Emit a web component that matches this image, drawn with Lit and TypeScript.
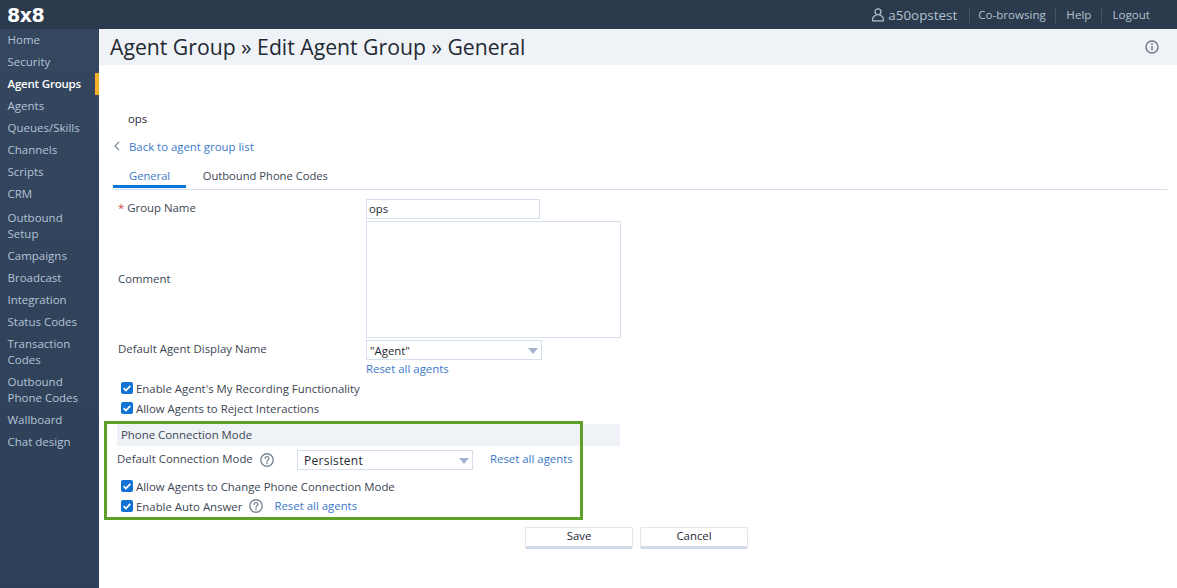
import { LitElement, css, html } from "lit";
import { customElement, property } from "lit/decorators.js";

const NAV = [
  "Home", "Security", "Agent Groups", "Agents", "Queues/Skills", "Channels", "Scripts", "CRM",
  "Outbound Setup", "Campaigns", "Broadcast", "Integration", "Status Codes",
  "Transaction Codes", "Outbound Phone Codes", "Wallboard", "Chat design",
];

const helpIcon = html`<svg class="help" width="16" height="16" viewBox="0 0 16 16" fill="none">
  <circle cx="8" cy="8" r="6.2" stroke="#7b8794" stroke-width="1.4"></circle>
  <path d="M6.1 6.4a1.9 1.9 0 1 1 2.9 1.6c-.7.4-1 .8-1 1.5" stroke="#7b8794" stroke-width="1.3" stroke-linecap="round"></path>
  <circle cx="8" cy="11.4" r=".8" fill="#7b8794"></circle>
</svg>`;

@customElement("app-check")
export class AppCheck extends LitElement {
  @property({ type: String }) label = "";

  render() {
    return html`
      <span class="box">
        <svg width="12" height="12" viewBox="0 0 12 12" fill="none">
          <path d="M2.6 6.2l2.3 2.3 4.4-4.6" stroke="#fff" stroke-width="1.7"></path>
        </svg>
      </span>
      <span class="text">${this.label}</span>
      <slot></slot>
    `;
  }

  static styles = css`
    :host {
      display: flex;
      align-items: center;
      height: 20px;
      color: #3c4654;
    }
    .box {
      width: 12px;
      height: 12px;
      border-radius: 2px;
      background: #1272d3;
      display: flex;
      margin-right: 3px;
    }
    .text {
      white-space: nowrap;
    }
  `;
}

@customElement("app-select")
export class AppSelect extends LitElement {
  @property({ type: String }) value = "";

  render() {
    return html`<span>${this.value}</span><i class="arrow"></i>`;
  }

  static styles = css`
    :host {
      box-sizing: border-box;
      display: flex;
      align-items: center;
      justify-content: space-between;
      height: 20px;
      border: 1px solid #d5dfee;
      padding: 0 3px 0 3px;
      color: #1f2933;
    }
    .arrow {
      width: 0;
      height: 0;
      border-left: 5px solid transparent;
      border-right: 5px solid transparent;
      border-top: 6px solid #a3b4cc;
      margin-top: 2px;
    }
  `;
}

@customElement("app-root")
export class AppRoot extends LitElement {
  render() {
    return html`
      <header class="topbar">
        <div class="logo">8x8</div>
        <div class="top-links">
          <span class="user">
            <svg width="16" height="16" viewBox="0 0 16 16" fill="none" stroke="#b4c0cf" stroke-width="1.2">
              <circle cx="8" cy="4.8" r="3"></circle>
              <path d="M6.4 8.2C4 8.8 2.7 10 2.7 12.2v1.6h10.6v-1.6c0-2.2-1.3-3.4-3.7-4"></path>
            </svg>
            a50opstest
          </span>
          <span class="top-link cobrowse">Co-browsing</span>
          <span class="top-link help-link">Help</span>
          <span class="top-link">Logout</span>
        </div>
      </header>
      <div class="body">
        <nav class="sidebar">
          ${NAV.map((item) => html`<a class="nav-item ${item === "Agent Groups" ? "active" : ""}">${item}</a>`)}
        </nav>
        <main class="main">
          <div class="title-bar">
            <h1>Agent Group » Edit Agent Group » General</h1>
            <svg width="16" height="16" viewBox="0 0 16 16" fill="none">
              <circle cx="8" cy="8" r="6" stroke="#6d7682" stroke-width="1.4"></circle>
              <path d="M8 7.2v4" stroke="#6d7682" stroke-width="1.5"></path>
              <circle cx="8" cy="5" r=".9" fill="#6d7682"></circle>
            </svg>
          </div>
          <div class="content">
            <div class="group-name">ops</div>
            <div class="back">
              <svg width="8" height="10" viewBox="0 0 8 10" fill="none">
                <path d="M6 .8L2 5l4 4.2" stroke="#7b8794" stroke-width="1.2"></path>
              </svg>
              <a class="link">Back to agent group list</a>
            </div>
            <div class="tabs">
              <span class="tab active">General</span>
              <span class="tab">Outbound Phone Codes</span>
            </div>

            <div class="form">
              <label class="row-name"><span class="req">*</span> Group Name</label>
              <div class="input name-input">ops</div>
              <label class="row-comment">Comment</label>
              <div class="input textarea"></div>
              <label class="row-display">Default Agent Display Name</label>
              <div>
                <app-select class="display-select" value='"Agent"'></app-select>
                <a class="link reset">Reset all agents</a>
              </div>
            </div>

            <div class="checks">
              <app-check label="Enable Agent's My Recording Functionality"></app-check>
              <app-check label="Allow Agents to Reject Interactions"></app-check>
            </div>

            <section class="phone">
              <div class="section-head">Phone Connection Mode</div>
              <div class="mode-row">
                <span class="mode-label"><span class="mode-text">Default Connection Mode</span> ${helpIcon}</span>
                <app-select class="mode-select" value="Persistent"></app-select>
                <a class="link mode-reset">Reset all agents</a>
              </div>
              <div class="checks phone-checks">
                <app-check label="Allow Agents to Change Phone Connection Mode"></app-check>
                <app-check label="Enable Auto Answer">
                  ${helpIcon}
                  <a class="link auto-reset">Reset all agents</a>
                </app-check>
              </div>
              <div class="highlight"></div>
            </section>

            <div class="actions">
              <button>Save</button>
              <button>Cancel</button>
            </div>
          </div>
        </main>
      </div>
    `;
  }

  static styles = css`
    :host {
      display: block;
      height: 588px;
      overflow: hidden;
      font-family: "Open Sans", "Noto Sans", sans-serif;
      font-size: 11.4px;
      color: #3c4654;
      background: #fff;
    }
    .topbar {
      height: 29px;
      background: #2b3a4c;
      display: flex;
      align-items: center;
      justify-content: space-between;
      padding: 0 16px 0 7px;
    }
    .logo {
      color: #fff;
      font-family: "DejaVu Sans", sans-serif;
      font-weight: 700;
      font-size: 19px;
      letter-spacing: -0.5px;
    }
    .top-links {
      display: flex;
      align-items: center;
    }
    .user {
      display: flex;
      align-items: center;
      gap: 2px;
      font-size: 13.4px;
      color: #b4c0cf;
      padding-right: 12px;
      border-right: 1px solid #45536a;
      height: 16px;
    }
    .top-link {
      color: #b4c0cf;
      font-size: 11.6px;
      padding: 0 10.5px;
      height: 16px;
      line-height: 16px;
      border-left: 1px solid #45536a;
    }
    .cobrowse {
      border-left: 0;
      padding-left: 8px;
      padding-right: 9px;
    }
    .help-link {
      padding-right: 9.5px;
    }
    .top-link:last-child {
      padding-right: 11px;
    }
    .body {
      display: flex;
      height: 559px;
    }
    .sidebar {
      width: 99px;
      flex: none;
      background: linear-gradient(#34475f, #2e4058);
      display: flex;
      flex-direction: column;
    }
    .nav-item {
      box-sizing: border-box;
      padding: 3px 10px 3px 7.5px;
      min-height: 22px;
      line-height: 16px;
      color: #b4c3d6;
      font-size: 11.5px;
    }
    .nav-item:nth-child(9) {
      padding-top: 5px;
    }
    .nav-item.active {
      color: #fff;
      font-weight: 600;
      border-right: 4px solid #f6ae2d;
      padding-right: 0;
      white-space: nowrap;
      letter-spacing: -0.2px;
    }
    .main {
      flex: 1;
      min-width: 0;
    }
    .title-bar {
      height: 36px;
      background: #eff2f7;
      display: flex;
      align-items: center;
      justify-content: space-between;
      padding: 0 17px 2px 11px;
      box-sizing: border-box;
    }
    h1 {
      margin: 0;
      font-size: 21.2px;
      font-weight: 400;
      color: #1f2933;
    }
    .title-bar svg {
      margin-top: 2px;
    }
    .content {
      padding: 46px 10px 0 14px;
    }
    .group-name {
      margin-left: 15px;
      height: 16px;
      line-height: 16px;
      color: #1f2933;
    }
    .back {
      display: flex;
      align-items: center;
      gap: 8px;
      height: 16px;
      margin-top: 11px;
    }
    .link {
      color: #3a78c9;
      white-space: nowrap;
    }
    .tabs {
      display: flex;
      margin-top: 6px;
      height: 29px;
      border-bottom: 1px solid #d5dfee;
      box-sizing: content-box;
      font-size: 11.2px;
    }
    .tab {
      padding: 8px 17px 0 17px;
      height: 18px;
      color: #3c4654;
    }
    .tab.active {
      color: #3a78c9;
      border-bottom: 3px solid #0f73d6;
      height: 17px;
      padding: 8px 15.5px 0 16px;
    }
    .form {
      display: grid;
      grid-template-columns: 248px 1fr;
      grid-template-rows: 20px 117px auto;
      row-gap: 2px;
      margin: 9px 0 0 5px;
    }
    .form label {
      align-self: center;
    }
    .row-name {
      margin-top: -3px;
    }
    .row-comment {
      margin-bottom: 2px;
    }
    .row-display {
      align-self: start !important;
      margin-top: 1px;
    }
    .req {
      color: #d8434a;
    }
    .input {
      box-sizing: border-box;
      border: 1px solid #d5dfee;
      padding: 0 2px;
      line-height: 18px;
      color: #1f2933;
    }
    .name-input {
      width: 174px;
    }
    .textarea {
      width: 255px;
    }
    .display-select {
      width: 176px;
    }
    .reset {
      display: block;
      height: 18px;
      line-height: 18px;
    }
    .checks {
      margin: 0 0 0 8px;
    }
    .phone {
      position: relative;
      margin-top: 6px;
    }
    .section-head {
      width: 503px;
      margin-left: 4px;
      height: 22px;
      line-height: 22px;
      padding-left: 4px;
      box-sizing: border-box;
      background: #eff2f7;
      color: #3c4654;
    }
    .mode-row {
      display: grid;
      grid-template-columns: 163px 176px auto;
      column-gap: 17px;
      align-items: center;
      margin: 4px 0 0 4px;
      height: 20px;
    }
    .mode-label {
      display: flex;
      align-items: center;
      gap: 6px;
      white-space: nowrap;
    }
    .mode-text {
      margin-bottom: 3px;
    }
    .mode-reset {
      margin-bottom: 4px;
    }
    .mode-select {
      font-size: 12px;
      letter-spacing: 0.3px;
      padding-left: 6px;
    }
    .phone-checks {
      margin-top: 6px;
    }
    .help {
      flex: none;
    }
    app-check .help {
      margin-left: 6px;
    }
    .auto-reset {
      margin: 0 0 2px 10px;
    }
    .highlight {
      position: absolute;
      left: -9px;
      top: -3px;
      width: 473px;
      height: 93px;
      border: 3px solid #5fa128;
      pointer-events: none;
    }
    .actions {
      display: flex;
      gap: 7px;
      margin: 11px 0 0 412px;
    }
    button {
      width: 108px;
      height: 22px;
      padding: 0 0 3px;
      background: #fff;
      border: 1px solid #e3e8ef;
      border-bottom: 3px solid #d0dae8;
      border-radius: 2px;
      font: inherit;
      color: #1f2933;
    }
  `;
}
